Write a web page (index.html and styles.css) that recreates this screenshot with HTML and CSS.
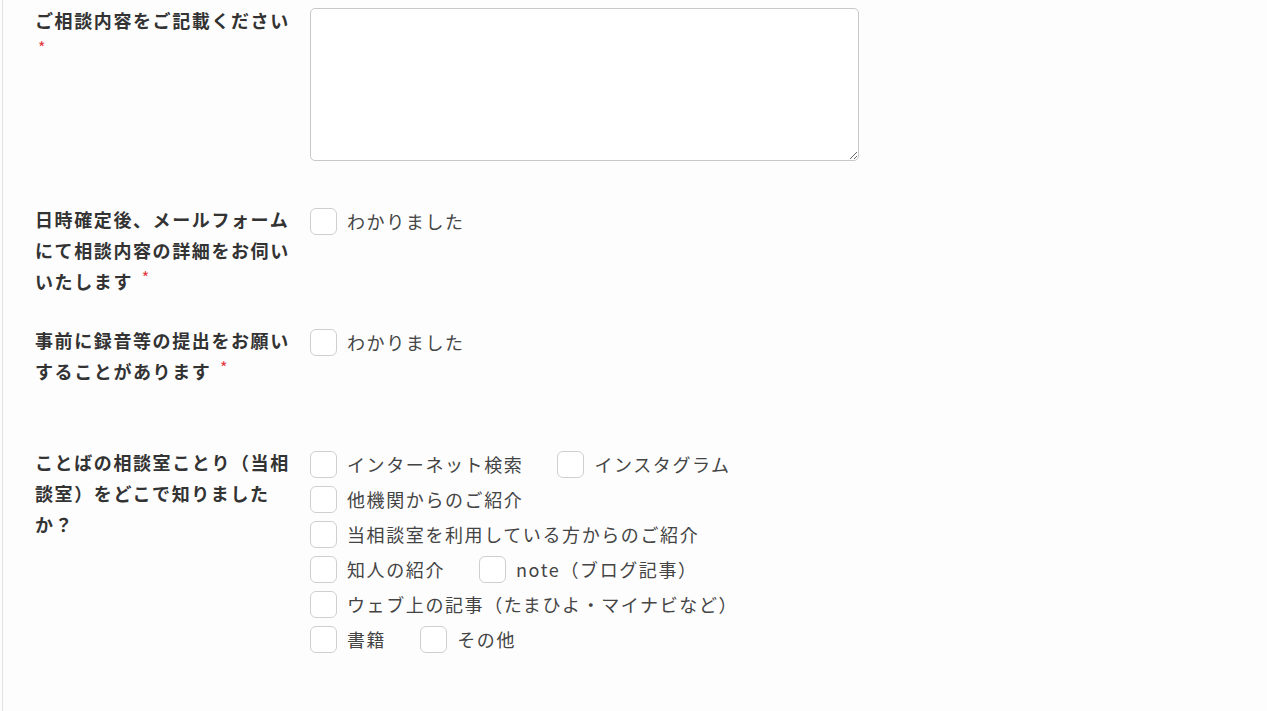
FILE: index.html
```html
<!DOCTYPE html>
<html lang="ja">
<head>
    <meta charset="UTF-8">
    <meta name="viewport" content="width=device-width, initial-scale=1.0">
    <title>ご相談フォーム | ことばの相談室ことり</title>
    <link rel="stylesheet" href="styles.css">
</head>
<body>
    <div class="form-wrap">
        <div class="form-row row-text">
            <label class="form-label" for="detail">ご相談内容をご記載ください <span class="required">*</span></label>
            <div class="form-field">
                <textarea id="detail" class="form-textarea"></textarea>
            </div>
        </div>

        <div class="form-row">
            <div class="form-label">日時確定後、メールフォームにて相談内容の詳細をお伺いいたします <span class="required">*</span></div>
            <div class="form-field">
                <ul class="check-list">
                    <li><label class="check-item"><input type="checkbox"><span>わかりました</span></label></li>
                </ul>
            </div>
        </div>

        <div class="form-row row-spaced">
            <div class="form-label">事前に録音等の提出をお願いすることがあります <span class="required">*</span></div>
            <div class="form-field">
                <ul class="check-list">
                    <li><label class="check-item"><input type="checkbox"><span>わかりました</span></label></li>
                </ul>
            </div>
        </div>

        <div class="form-row">
            <div class="form-label">ことばの相談室ことり（当相談室）をどこで知りましたか？</div>
            <div class="form-field">
                <ul class="check-list">
                    <li><label class="check-item"><input type="checkbox"><span>インターネット検索</span></label></li>
                    <li><label class="check-item"><input type="checkbox"><span>インスタグラム</span></label></li>
                    <li><label class="check-item"><input type="checkbox"><span>他機関からのご紹介</span></label></li>
                    <li><label class="check-item"><input type="checkbox"><span>当相談室を利用している方からのご紹介</span></label></li>
                    <li><label class="check-item"><input type="checkbox"><span>知人の紹介</span></label></li>
                    <li><label class="check-item"><input type="checkbox"><span>note（ブログ記事）</span></label></li>
                    <li><label class="check-item"><input type="checkbox"><span>ウェブ上の記事（たまひよ・マイナビなど）</span></label></li>
                    <li><label class="check-item"><input type="checkbox"><span>書籍</span></label></li>
                    <li><label class="check-item"><input type="checkbox"><span>その他</span></label></li>
                </ul>
            </div>
        </div>
    </div>
</body>
</html>
```

FILE: styles.css
```css
body {
    margin: 0;
    padding: 0;
    background-color: #fdfdfd;
    color: #333;
    font-family: "Noto Sans CJK JP", "Noto Sans", sans-serif;
}

.form-wrap {
    margin-left: 2px;
    min-height: 711px;
    box-sizing: border-box;
    padding: 5px 0 0 32px;
    border-left: 1px solid #e3e3e3;
}

.form-row {
    display: grid;
    grid-template-columns: 258px 549px;
    column-gap: 17px;
    margin-bottom: 28px;
}

.row-text {
    margin-bottom: 43px;
}

.row-spaced {
    margin-bottom: 60px;
}

.form-label {
    display: block;
    font-size: 18px;
    font-weight: bold;
    line-height: 31px;
    letter-spacing: 1.6px;
    color: #333;
}

.required {
    display: inline-block;
    position: relative;
    top: -5px;
    margin-left: 3px;
    line-height: 12px;
    color: #e2383f;
    font-size: 16px;
    font-weight: normal;
}

.form-textarea {
    display: block;
    box-sizing: border-box;
    width: 549px;
    height: 153px;
    margin-top: 3px;
    border: 1px solid #c8c8c8;
    border-radius: 5px;
    background-color: #fff;
    font-family: inherit;
    font-size: 16px;
}

.check-list {
    list-style-type: none;
    margin: 0;
    padding: 0;
    max-width: 480px;
    display: flex;
    flex-wrap: wrap;
    column-gap: 34px;
}

.check-item {
    display: flex;
    align-items: center;
    height: 35px;
    font-size: 18px;
    letter-spacing: 1.6px;
    color: #444;
    cursor: pointer;
}

.check-item span {
    position: relative;
    top: -1px;
}

.check-item input {
    appearance: none;
    -webkit-appearance: none;
    width: 27px;
    height: 27px;
    margin: 0 10px 0 0;
    border: 1px solid #cfcfcf;
    border-radius: 6px;
    background-color: #fff;
    cursor: pointer;
}

.check-item input:checked {
    background-color: #e2383f;
    border-color: #e2383f;
}
```
